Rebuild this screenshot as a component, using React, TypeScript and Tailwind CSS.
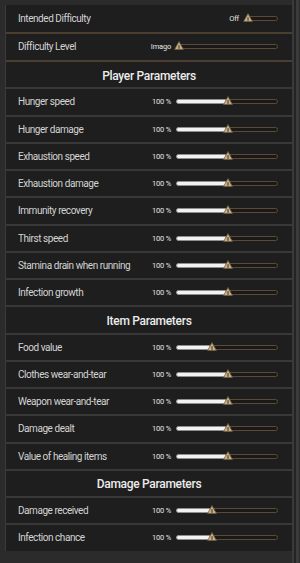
const font = { fontFamily: 'Roboto, "Noto Sans", sans-serif' };

type Row =
  | { kind: "header"; title: string }
  | { kind: "slider"; label: string; value: string; pos: number; fill: boolean; short?: boolean };

const rows: Row[] = [
  { kind: "slider", label: "Intended Difficulty", value: "Off", pos: 0, fill: false, short: true },
  { kind: "slider", label: "Difficulty Level", value: "Imago", pos: 0.02, fill: false },
  { kind: "header", title: "Player Parameters" },
  { kind: "slider", label: "Hunger speed", value: "100 %", pos: 0.5, fill: true },
  { kind: "slider", label: "Hunger damage", value: "100 %", pos: 0.5, fill: true },
  { kind: "slider", label: "Exhaustion speed", value: "100 %", pos: 0.5, fill: true },
  { kind: "slider", label: "Exhaustion damage", value: "100 %", pos: 0.5, fill: true },
  { kind: "slider", label: "Immunity recovery", value: "100 %", pos: 0.5, fill: true },
  { kind: "slider", label: "Thirst speed", value: "100 %", pos: 0.5, fill: true },
  { kind: "slider", label: "Stamina drain when running", value: "100 %", pos: 0.5, fill: true },
  { kind: "slider", label: "Infection growth", value: "100 %", pos: 0.5, fill: true },
  { kind: "header", title: "Item Parameters" },
  { kind: "slider", label: "Food value", value: "100 %", pos: 0.34, fill: true },
  { kind: "slider", label: "Clothes wear-and-tear", value: "100 %", pos: 0.5, fill: true },
  { kind: "slider", label: "Weapon wear-and-tear", value: "100 %", pos: 0.5, fill: true },
  { kind: "slider", label: "Damage dealt", value: "100 %", pos: 0.5, fill: true },
  { kind: "slider", label: "Value of healing items", value: "100 %", pos: 0.5, fill: true },
  { kind: "header", title: "Damage Parameters" },
  { kind: "slider", label: "Damage received", value: "100 %", pos: 0.34, fill: true },
  { kind: "slider", label: "Infection chance", value: "100 %", pos: 0.34, fill: true },
];

function Handle() {
  return (
    <svg width="10" height="9" viewBox="0 0 10 9" className="block">
      <path d="M5 0.6 L9.4 8.5 H0.6 Z" fill="#c8b18b" stroke="#6f5b40" strokeWidth="0.8" />
      <path d="M5 4.2 V7.8" stroke="#3b3126" strokeWidth="1" />
    </svg>
  );
}

function Slider({ pos, fill, short }: { pos: number; fill: boolean; short?: boolean }) {
  return (
    <div className={short ? "relative w-[31px] h-[5px]" : "relative w-[102px] h-[5px]"}>
      <div className="absolute inset-0 rounded-full border border-[#5a4a37] bg-[#1b1917]" />
      {fill && (
        <div
          className="absolute left-0 top-0 h-[5px] rounded-full border border-[#8f8f8f] bg-[#f2f2f2]"
          style={{ width: `${pos * 100}%` }}
        />
      )}
      <div className="absolute top-[-3px] -translate-x-1/2" style={{ left: `calc(${pos * 100}% + 1px)` }}>
        <Handle />
      </div>
    </div>
  );
}

export default function App() {
  return (
    <div className="w-[300px] h-[563px] bg-[#2b2b2b] flex overflow-hidden" style={font}>
      <div className="flex-1 pl-[5px] pt-[5px]">
        <div className="border-l border-[#3a3a3a] flex flex-col">
          {rows.map((r, i) => {
            const tall = i < 2;
            const sep =
              i < rows.length - 1 ? (
                <div className={i < 2 ? "h-[2px] bg-[#4b3d2f]" : "h-[2px] bg-[#383838]"} />
              ) : null;
            if (r.kind === "header") {
              return (
                <div key={i}>
                  <div className="h-[25.25px] bg-[#1e1e1e] flex items-center justify-center pt-[2px]">
                    <span className="text-[12px] font-medium tracking-[-0.3px] text-[#ececec]">{r.title}</span>
                  </div>
                  {sep}
                </div>
              );
            }
            return (
              <div key={i}>
                <div
                  className={
                    (tall ? "h-[26.5px] " : "h-[25.25px] ") +
                    "bg-[#1e1e1e] flex items-center pl-[12px] pr-[14px] whitespace-nowrap"
                  }
                >
                  <span className="flex-1 text-[10px] tracking-[-0.45px] text-[#d4d4d4]">{r.label}</span>
                  <span
                    className={
                      "text-[7.5px] tracking-[-0.2px] text-[#e4e4e4] " + (r.short ? "mr-[8px]" : "mr-[5px]")
                    }
                  >
                    {r.value}
                  </span>
                  <Slider pos={r.pos} fill={r.fill} short={r.short} />
                </div>
                {sep}
              </div>
            );
          })}
        </div>
      </div>
      <div className="w-[8px] flex">
        <div className="w-[2px] bg-[#3a3a3a]" />
        <div className="w-[2px] bg-[#242424]" />
        <div className="w-[3px] bg-[#3b3b3b]" />
        <div className="w-[1px] bg-[#2a2a2a]" />
      </div>
    </div>
  );
}
